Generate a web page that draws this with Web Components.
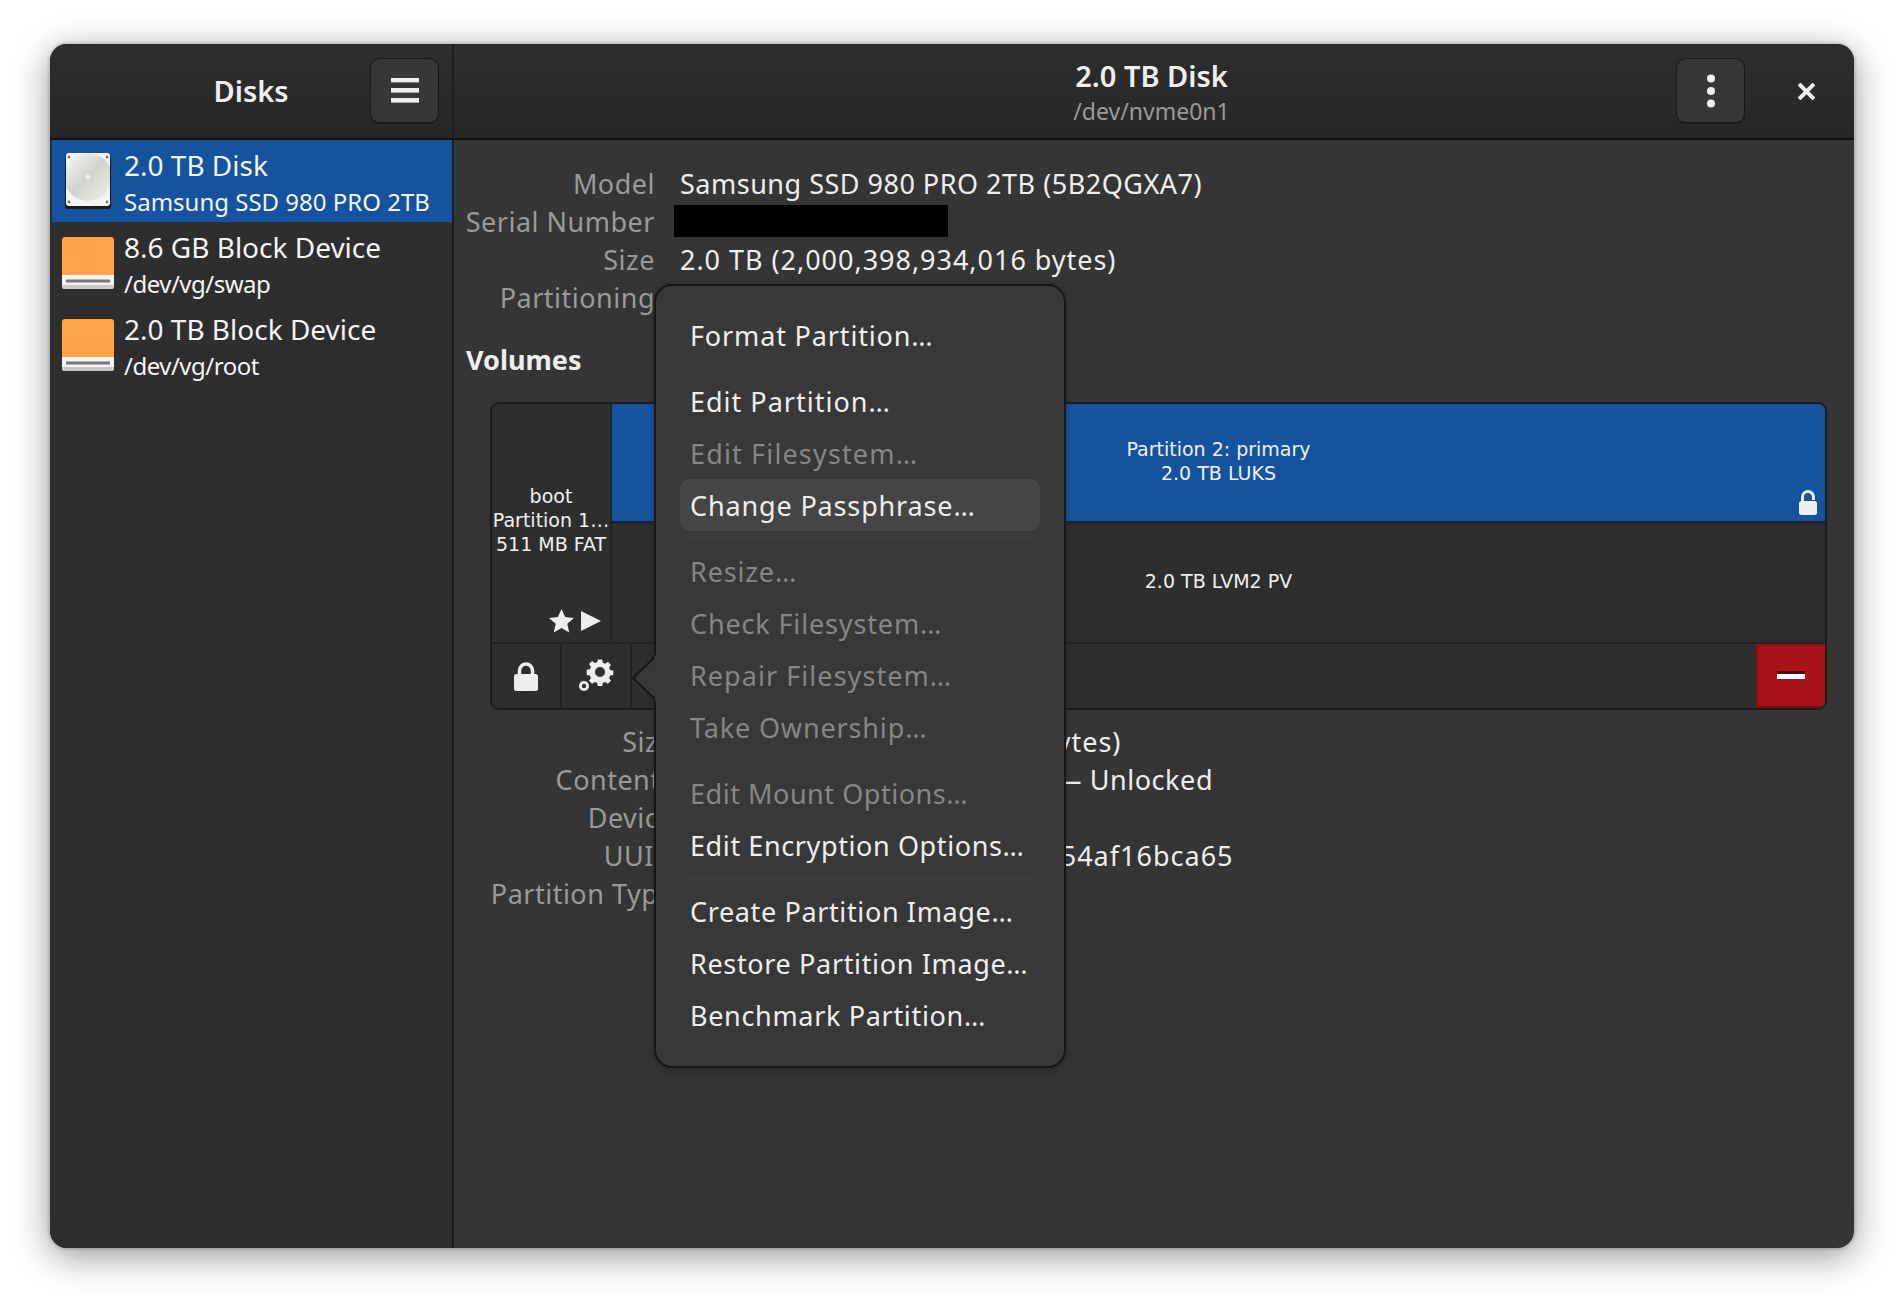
<!DOCTYPE html>
<html>
<head>
<meta charset="utf-8">
<title>Disks</title>
<style>
  html, body { margin: 0; background: #fff; }
  body { padding: 44px 50px; font-family: "Noto Sans", sans-serif; }
</style>
</head>
<body>
<disks-window></disks-window>
<script>
class IconButton extends HTMLElement {
  constructor() {
    super();
    this.attachShadow({ mode: "open" });
    this.shadowRoot.innerHTML = `
    <style>
      :host {
        display: flex;
        align-items: center;
        justify-content: center;
        width: 69px;
        height: 66px;
        box-sizing: border-box;
        background: #373737;
        border: 1.5px solid #1a1a1a;
        border-bottom-width: 2.5px;
        border-radius: 10px;
      }
      svg { display: block; }
    </style>
    <slot></slot>`;
  }
}
customElements.define("icon-button", IconButton);

class HeaderTitle extends HTMLElement {
  constructor() {
    super();
    this.attachShadow({ mode: "open" });
    this.shadowRoot.innerHTML = `
    <style>
      :host { display: block; text-align: center; color: #eee; white-space: nowrap; padding-bottom: 2px; }
      :host([sub]) { padding: 4px 0 0; margin-right: 5px; }
      #title { font-size: 29px; font-weight: 600; line-height: 35px; }
      #sub { font-size: 23px; line-height: 36px; color: #9a9a9a; }
      #sub:empty { display: none; }
    </style>
    <div id="title"></div>
    <div id="sub"></div>`;
  }
  connectedCallback() {
    this.shadowRoot.querySelector("#title").textContent = this.getAttribute("title");
    this.shadowRoot.querySelector("#sub").textContent = this.getAttribute("sub") || "";
  }
}
customElements.define("header-title", HeaderTitle);

class DiskRow extends HTMLElement {
  constructor() {
    super();
    this.attachShadow({ mode: "open" });
    this.shadowRoot.innerHTML = `
    <style>
      :host {
        display: flex;
        align-items: center;
        height: 82px;
        color: #f4f4f4;
      }
      :host([selected]) { background: #15539e; margin-left: 2px; }
      #icon { width: 74px; flex: none; display: flex; justify-content: center; padding-left: 1px; box-sizing: border-box; }
      :host([selected]) #icon { width: 72px; padding-left: 0; }
      #text { margin-top: 9px; }
      #title { font-size: 28px; line-height: 37px; margin-top: -4px; }
      #sub { font-size: 24px; line-height: 36px; letter-spacing: var(--sub-spacing, 0); }
    </style>
    <div id="icon"><slot></slot></div>
    <div id="text">
      <div id="title"></div>
      <div id="sub"></div>
    </div>`;
  }
  connectedCallback() {
    this.shadowRoot.querySelector("#title").textContent = this.getAttribute("title");
    this.shadowRoot.querySelector("#sub").textContent = this.getAttribute("sub");
  }
}
customElements.define("disk-row", DiskRow);

class InfoGrid extends HTMLElement {
  constructor() {
    super();
    this.attachShadow({ mode: "open" });
    this.shadowRoot.innerHTML = `
    <style>
      :host {
        display: grid;
        grid-template-columns: var(--label-width) 1fr;
        column-gap: var(--gap, 25px);
        grid-auto-rows: 38px;
        align-items: center;
        font-size: 27px;
        white-space: nowrap;
        letter-spacing: 0.5px;
      }
      .label { text-align: right; color: #9a9a9a; justify-self: end; }
      .value { color: #eeeeee; }
      .redacted { background: #000; height: 32px; width: 274px; margin-left: -6px; }
    </style>`;
  }
  connectedCallback() {
    const rows = JSON.parse(this.getAttribute("rows"));
    rows.forEach(([label, value, spacing]) => {
      const l = document.createElement("div");
      l.className = "label";
      l.textContent = label;
      const v = document.createElement("div");
      if (value === null) {
        v.className = "redacted";
      } else {
        v.className = "value";
        v.textContent = value;
        if (spacing) v.style.letterSpacing = spacing;
      }
      this.shadowRoot.append(l, v);
    });
  }
}
customElements.define("info-grid", InfoGrid);

class VolumeMap extends HTMLElement {
  constructor() {
    super();
    this.attachShadow({ mode: "open" });
    this.shadowRoot.innerHTML = `
    <style>
      :host {
        display: grid;
        grid-template-columns: 120px 1fr;
        grid-template-rows: 120px 118px 66px;
        margin-left: 36px;
        width: 1337px;
        box-sizing: border-box;
        border: 2px solid #1c1c1c;
        border-radius: 9px;
        background: #2e2e2e;
        overflow: hidden;
        color: #f0f0f0;
        font-family: "DejaVu Sans", sans-serif;
        font-size: 19px;
        line-height: 24px;
        text-align: center;
      }
      .part { display: flex; flex-direction: column; align-items: center; justify-content: center; position: relative; box-sizing: border-box; }
      #boot { grid-row: 1 / 3; border-right: 2px solid #232323; padding-bottom: 6px; overflow: hidden; white-space: nowrap; }
      #boot .icons { position: absolute; right: 9px; bottom: 9px; display: flex; gap: 7px; align-items: center; }
      #luks { background: #15539e; border-bottom: 3px solid #1c2430; padding-bottom: 3px; }
      #luks svg { position: absolute; right: 7px; bottom: 6px; }
      #lvm { padding-bottom: 4px; }
      #tools {
        grid-column: 1 / 3;
        display: flex;
        border-top: 2px solid #232323;
        justify-content: space-between;
      }
      #left { display: flex; }
      .tool {
        width: 70px;
        display: flex;
        align-items: center;
        justify-content: center;
        border-right: 2px solid #232323;
        box-sizing: border-box;
      }
      #remove {
        width: 69px;
        padding: 0 2px 2px 0;
        background: #a9141b;
        border-left: 2px solid #8b1116;
        box-shadow: inset 0 2px 0 #8b1116, inset 0 -2px 0 #7d0f14;
        display: flex;
        align-items: center;
        justify-content: center;
        box-sizing: border-box;
      }
    </style>
    <div class="part" id="boot">
      <div>boot</div>
      <div>Partition 1…</div>
      <div>511 MB FAT</div>
      <div class="icons">
        <svg width="25" height="24" viewBox="0 0 25 24"><path fill="#eee" d="M12.5 0l3.6 8 8.9.9-6.7 5.9 1.9 8.7-7.7-4.5-7.7 4.5 1.9-8.7L0 8.9 8.9 8z"/></svg>
        <svg width="20" height="20" viewBox="0 0 20 20"><path fill="#eee" d="M0 0l20 10L0 20z"/></svg>
      </div>
    </div>
    <div class="part" id="luks">
      <div>Partition 2: primary</div>
      <div>2.0 TB LUKS</div>
      <svg width="20" height="25" viewBox="0 0 20 25"><path fill="none" stroke="#eee" stroke-width="3" d="M4.5 13V7a5.5 5.5 0 0 1 11 0v3"/><rect x="1" y="11" width="18" height="14" rx="2.5" fill="#eee"/></svg>
    </div>
    <div class="part" id="lvm">2.0 TB LVM2 PV</div>
    <div id="tools">
      <div id="left">
        <div class="tool">
          <svg width="24" height="29" viewBox="0 0 24 29"><path fill="none" stroke="#eee" stroke-width="3.5" d="M5.5 13V8.5a6.5 6.5 0 0 1 13 0V13"/><rect x="0" y="12" width="24" height="17" rx="2.5" fill="#eee"/></svg>
        </div>
        <div class="tool">
          <svg width="36" height="34" viewBox="0 0 36 34">
            <g transform="translate(22 13)" fill="#eee">
              <path fill-rule="evenodd" d="M-2.2-12.5h4.4l.6 3.2 2.4 1 2.7-1.9 3.1 3.1-1.9 2.7 1 2.4 3.2.6v4.4l-3.2.6-1 2.4 1.9 2.7-3.1 3.1-2.7-1.9-2.4 1-.6 3.2h-4.4l-.6-3.2-2.4-1-2.7 1.9-3.1-3.1 1.9-2.7-1-2.4-3.2-.6V-2.2l3.2-.6 1-2.4-1.9-2.7 3.1-3.1 2.7 1.9 2.4-1zM0-5a5 5 0 1 0 0 10A5 5 0 0 0 0-5z"/>
            </g>
            <circle cx="6" cy="27" r="3.6" fill="none" stroke="#eee" stroke-width="2.8"/>
          </svg>
        </div>
      </div>
      <div id="remove">
        <svg width="28" height="8" viewBox="0 0 28 8"><rect y="0" width="28" height="3" fill="#4a0a0d"/><rect y="3" width="28" height="5" fill="#fff"/></svg>
      </div>
    </div>`;
  }
}
customElements.define("volume-map", VolumeMap);

class MenuItem extends HTMLElement {
  constructor() {
    super();
    this.attachShadow({ mode: "open" });
    this.shadowRoot.innerHTML = `
    <style>
      :host {
        display: flex;
        align-items: center;
        height: 52px;
        padding: 0 10px;
        border-radius: 10px;
        color: #eeeeee;
        font-size: 27px;
        letter-spacing: var(--spacing, 0.85px);
        white-space: nowrap;
      }
      :host([disabled]) { color: #868686; }
      :host([hover]) { background: #454545; }
    </style>
    <slot></slot>`;
  }
}
customElements.define("menu-item", MenuItem);

class MenuSep extends HTMLElement {
  constructor() {
    super();
    this.attachShadow({ mode: "open" });
    this.shadowRoot.innerHTML = `
    <style>
      :host { display: block; height: 2px; margin: 6px 8px; background: #3d3d3d; }
    </style>`;
  }
}
customElements.define("menu-sep", MenuSep);

class PopoverMenu extends HTMLElement {
  constructor() {
    super();
    this.attachShadow({ mode: "open" });
    this.shadowRoot.innerHTML = `
    <style>
      :host {
        display: block;
        position: absolute;
        left: 604px;
        top: 240px;
        width: 412px;
        height: 784px;
        box-sizing: border-box;
        padding: 23px 24px;
        background: #383838;
        border: 2px solid #161616;
        border-radius: 18px;
        box-shadow: 0 3px 8px rgba(0,0,0,.25);
      }
      svg { position: absolute; left: -25px; top: 369px; }
    </style>
    <svg width="26" height="46" viewBox="0 0 26 46"><path fill="#383838" stroke="#161616" stroke-width="2" d="M25 1L2 23l23 22"/><rect x="24" y="0" width="2" height="46" fill="#383838"/></svg>
    <slot></slot>`;
  }
}
customElements.define("popover-menu", PopoverMenu);

class DisksWindow extends HTMLElement {
  constructor() {
    super();
    const driveIcon = `<svg width="52" height="52" viewBox="0 0 52 52"><path fill="#ffa348" d="M3 0h46a3 3 0 0 1 3 3v35H0V3a3 3 0 0 1 3-3z"/><path fill="#f6f5f0" d="M0 38h52v11a3 3 0 0 1-3 3H3a3 3 0 0 1-3-3z"/><path fill="#c9c8c6" d="M0 49a3 3 0 0 0 3 3h46a3 3 0 0 0 3-3v-1H0z"/><rect x="4" y="42.5" width="44" height="3" fill="#77767b"/></svg>`;
    this.attachShadow({ mode: "open" });
    this.shadowRoot.innerHTML = `
    <style>
      :host {
        display: grid;
        grid-template-columns: 404px 1fr;
        grid-template-rows: 96px 1fr;
        position: relative;
        width: 1804px;
        height: 1204px;
        border-radius: 17px;
        background: #353535;
        box-shadow: 0 8px 36px rgba(0,0,0,.42), 0 0 4px rgba(0,0,0,.3);
        overflow: hidden;
      }
      header {
        display: grid;
        align-items: center;
        background: linear-gradient(#2e2e2e, #262626);
        border-bottom: 2px solid #111;
        box-sizing: border-box;
      }
      #head-left { grid-template-columns: 1fr auto 1fr; padding: 0 13px; border-right: 2px solid #1e1e1e; }
      #head-left icon-button { justify-self: end; }
      #head-right { grid-template-columns: 1fr auto 1fr; position: relative; }
      #actions { display: flex; justify-self: end; align-items: center; gap: 53px; padding-right: 39px; }
      aside { background: #2e2e2e; border-right: 2px solid #1e1e1e; box-sizing: border-box; }
      main { padding: 24px 0 0 0; }
      #volumes { color: #eee; font-size: 27px; font-weight: 700; line-height: 36px; margin: 26px 0 24px 12px; }
      #top-grid { --label-width: 187px; margin-left: 14px; }
      #bottom-grid { --label-width: 177px; --gap: 11px; margin: 12px 0 0 43px; }
    </style>
    <header id="head-left">
      <span></span>
      <header-title title="Disks"></header-title>
      <icon-button>
        <svg width="28" height="25" viewBox="0 0 28 25" fill="#eee"><rect width="28" height="4.4"/><rect y="10" width="28" height="4.6"/><rect y="20" width="28" height="4.6"/></svg>
      </icon-button>
    </header>
    <header id="head-right">
      <span></span>
      <header-title title="2.0 TB Disk" sub="/dev/nvme0n1"></header-title>
      <div id="actions">
        <icon-button>
          <svg width="10" height="34" viewBox="0 0 10 34" fill="#eee"><circle cx="5" cy="4.5" r="4"/><circle cx="5" cy="17" r="4"/><circle cx="5" cy="29.5" r="4"/></svg>
        </icon-button>
        <svg width="17" height="17" viewBox="0 0 17 17"><path stroke="#eee" stroke-width="4" d="M1 1l15 15M16 1L1 16"/></svg>
      </div>
    </header>
    <aside>
      <disk-row selected title="2.0 TB Disk" sub="Samsung SSD 980 PRO 2TB">
        <svg width="46" height="56" viewBox="0 0 46 56">
          <defs>
            <linearGradient id="plate" x1="0" y1="0" x2="1" y2="1"><stop offset="0" stop-color="#fbfaf8"/><stop offset=".5" stop-color="#d4d2cf"/><stop offset="1" stop-color="#f3f2ef"/></linearGradient>
            <clipPath id="cp"><rect x="1" y="0" width="44" height="53" rx="3"/></clipPath>
          </defs>
          <rect x="0" y="3" width="46" height="53" rx="3" fill="#1a1a1a"/>
          <rect x="1" y="0" width="44" height="53" rx="3" fill="#f6f5f3"/>
          <g clip-path="url(#cp)"><circle cx="23" cy="24" r="24" fill="url(#plate)"/><circle cx="23" cy="24" r="2.5" fill="#efeeec"/></g>
          <g fill="#77767b"><circle cx="4" cy="4" r="1.4"/><circle cx="42" cy="4" r="1.4"/><circle cx="4" cy="49" r="1.4"/><circle cx="42" cy="49" r="1.4"/></g>
        </svg>
      </disk-row>
      <disk-row style="--sub-spacing:-0.5px" title="8.6 GB Block Device" sub="/dev/vg/swap">${driveIcon}</disk-row>
      <disk-row style="--sub-spacing:-0.5px" title="2.0 TB Block Device" sub="/dev/vg/root">${driveIcon}</disk-row>
    </aside>
    <main>
      <info-grid id="top-grid" rows='[["Model","Samsung SSD 980 PRO 2TB (5B2QGXA7)"],["Serial Number",null],["Size","2.0 TB (2,000,398,934,016 bytes)","0.97px"],["Partitioning","GUID Partition Table"]]'></info-grid>
      <div id="volumes">Volumes</div>
      <volume-map></volume-map>
      <info-grid id="bottom-grid" rows='[["Size","2.0 TB (1,999,887,515,648 bytes)","0.97px"],["Contents","LUKS Encryption (version 2) — Unlocked","0.56px"],["Device","/dev/nvme0n1p2"],["UUID","b7c2e1d0-4a3f-4e21-9c7d-054af16bca65","1px"],["Partition Type","Linux filesystem"]]'></info-grid>
    </main>
    <popover-menu>
      <menu-item>Format Partition…</menu-item>
      <menu-sep></menu-sep>
      <menu-item style="--spacing:1px">Edit Partition…</menu-item>
      <menu-item disabled style="--spacing:1.15px">Edit Filesystem…</menu-item>
      <menu-item hover>Change Passphrase…</menu-item>
      <menu-sep></menu-sep>
      <menu-item disabled>Resize…</menu-item>
      <menu-item disabled>Check Filesystem…</menu-item>
      <menu-item disabled style="--spacing:1.05px">Repair Filesystem…</menu-item>
      <menu-item disabled>Take Ownership…</menu-item>
      <menu-sep></menu-sep>
      <menu-item disabled style="--spacing:0.53px">Edit Mount Options…</menu-item>
      <menu-item style="--spacing:0.6px">Edit Encryption Options…</menu-item>
      <menu-sep></menu-sep>
      <menu-item style="--spacing:0.63px">Create Partition Image…</menu-item>
      <menu-item style="--spacing:0.65px">Restore Partition Image…</menu-item>
      <menu-item style="--spacing:0.67px">Benchmark Partition…</menu-item>
    </popover-menu>`;
  }
}
customElements.define("disks-window", DisksWindow);
</script>
</body>
</html>
